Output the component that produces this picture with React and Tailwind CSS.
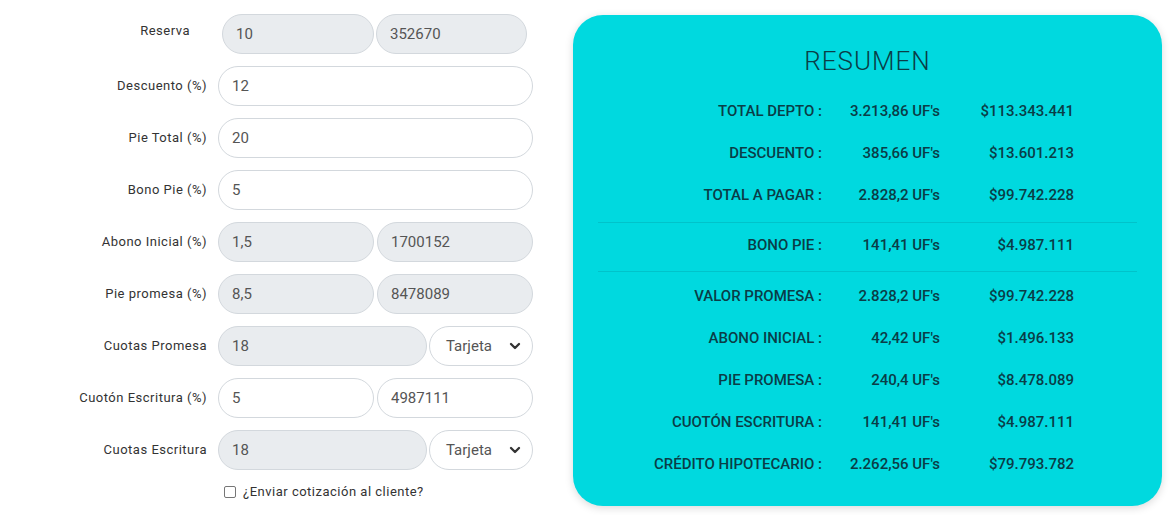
import { ChevronDown } from 'lucide-react';

const font = { fontFamily: 'Roboto, "Liberation Sans", sans-serif' };

const inputBase =
  'h-10 rounded-full border border-[#d3d8dd] pl-[13px] text-[15px] text-[#555] flex items-center';

function Field({ value, disabled, className = '' }) {
  return (
    <div className={`${inputBase} ${disabled ? 'bg-[#e9ecef]' : 'bg-white'} ${className}`}>
      {value}
    </div>
  );
}

function Select() {
  return (
    <div className="h-10 w-[104px] rounded-full border border-[#d3d8dd] bg-white flex items-center justify-between pl-[16px] pr-[9px] text-[15px] text-[#555]">
      <span>Tarjeta</span>
      <ChevronDown className="h-4 w-4 text-[#333]" strokeWidth={3.5} />
    </div>
  );
}

function Row({ label, children, labelClass = '' }) {
  return (
    <div className="flex items-center h-10">
      <div className={`w-[207px] text-right text-[13px] text-[#333] tracking-[0.5px] ${labelClass}`}>{label}</div>
      <div className="ml-[11px] w-[315px] flex gap-[3px]">{children}</div>
    </div>
  );
}

const resumen = [
  ['TOTAL DEPTO :', "3.213,86 UF's", '$113.343.441'],
  ['DESCUENTO :', "385,66 UF's", '$13.601.213'],
  ['TOTAL A PAGAR :', "2.828,2 UF's", '$99.742.228'],
];
const bono = [['BONO PIE :', "141,41 UF's", '$4.987.111']];
const resto = [
  ['VALOR PROMESA :', "2.828,2 UF's", '$99.742.228'],
  ['ABONO INICIAL :', "42,42 UF's", '$1.496.133'],
  ['PIE PROMESA :', "240,4 UF's", '$8.478.089'],
  ['CUOTÓN ESCRITURA :', "141,41 UF's", '$4.987.111'],
  ['CRÉDITO HIPOTECARIO :', "2.262,56 UF's", '$79.793.782'],
];

function SumRow({ r }) {
  return (
    <div className="h-[42px] grid grid-cols-[249px_118px_134px] items-center text-[15px] font-medium text-[#0a3d47]">
      <span className="text-right">{r[0]}</span>
      <span className="text-right">{r[1]}</span>
      <span className="text-right">{r[2]}</span>
    </div>
  );
}

export default function App() {
  return (
    <div className="w-[1170px] h-[515px] bg-white flex" style={font}>
      {/* left form */}
      <div className="w-[573px] pt-[14px] flex flex-col gap-3">
        <Row label="Reserva" labelClass="pr-[17px] -mt-[6px]">
          <div className="ml-[4px] w-[305px] flex gap-[2px]">
            <Field value="10" disabled className="w-[152px]" />
            <Field value="352670" disabled className="flex-1" />
          </div>
        </Row>
        <Row label="Descuento (%)">
          <Field value="12" className="flex-1" />
        </Row>
        <Row label="Pie Total (%)">
          <Field value="20" className="flex-1" />
        </Row>
        <Row label="Bono Pie (%)">
          <Field value="5" className="flex-1" />
        </Row>
        <Row label="Abono Inicial (%)">
          <Field value="1,5" disabled className="flex-1" />
          <Field value="1700152" disabled className="flex-1" />
        </Row>
        <Row label="Pie promesa (%)">
          <Field value="8,5" disabled className="flex-1" />
          <Field value="8478089" disabled className="flex-1" />
        </Row>
        <Row label="Cuotas Promesa">
          <div className="flex gap-[2px] w-full">
            <Field value="18" disabled className="flex-1" />
            <Select />
          </div>
        </Row>
        <Row label="Cuotón Escritura (%)">
          <Field value="5" className="flex-1" />
          <Field value="4987111" className="flex-1" />
        </Row>
        <Row label="Cuotas Escritura">
          <div className="flex gap-[2px] w-full">
            <Field value="18" disabled className="flex-1" />
            <Select />
          </div>
        </Row>
        <div className="flex items-center ml-[224px] gap-[7px]">
          <span className="w-[12px] h-[12px] border border-[#767676] rounded-[2px] bg-white" />
          <span className="text-[13px] tracking-[0.5px] text-[#333]">¿Enviar cotización al cliente?</span>
        </div>
      </div>

      {/* resumen card */}
      <div className="mt-[15px] w-[589px] h-[491px] rounded-[30px] bg-[#00d9df] shadow-[0_2px_8px_rgba(0,0,0,0.15)] pt-[31px]">
        <div className="text-center text-[26px] leading-[31px] font-light tracking-[1px] text-[#0a3d47] mb-[13px]">RESUMEN</div>
        {resumen.map((r) => (
          <SumRow key={r[0]} r={r} />
        ))}
        <div className="mx-[25px] h-px bg-[#00c3ca] mt-[6px] mb-px" />
        {bono.map((r) => (
          <SumRow key={r[0]} r={r} />
        ))}
        <div className="mx-[25px] h-px bg-[#00c3ca] mt-[5px] mb-[3px]" />
        {resto.map((r) => (
          <SumRow key={r[0]} r={r} />
        ))}
      </div>
    </div>
  );
}
